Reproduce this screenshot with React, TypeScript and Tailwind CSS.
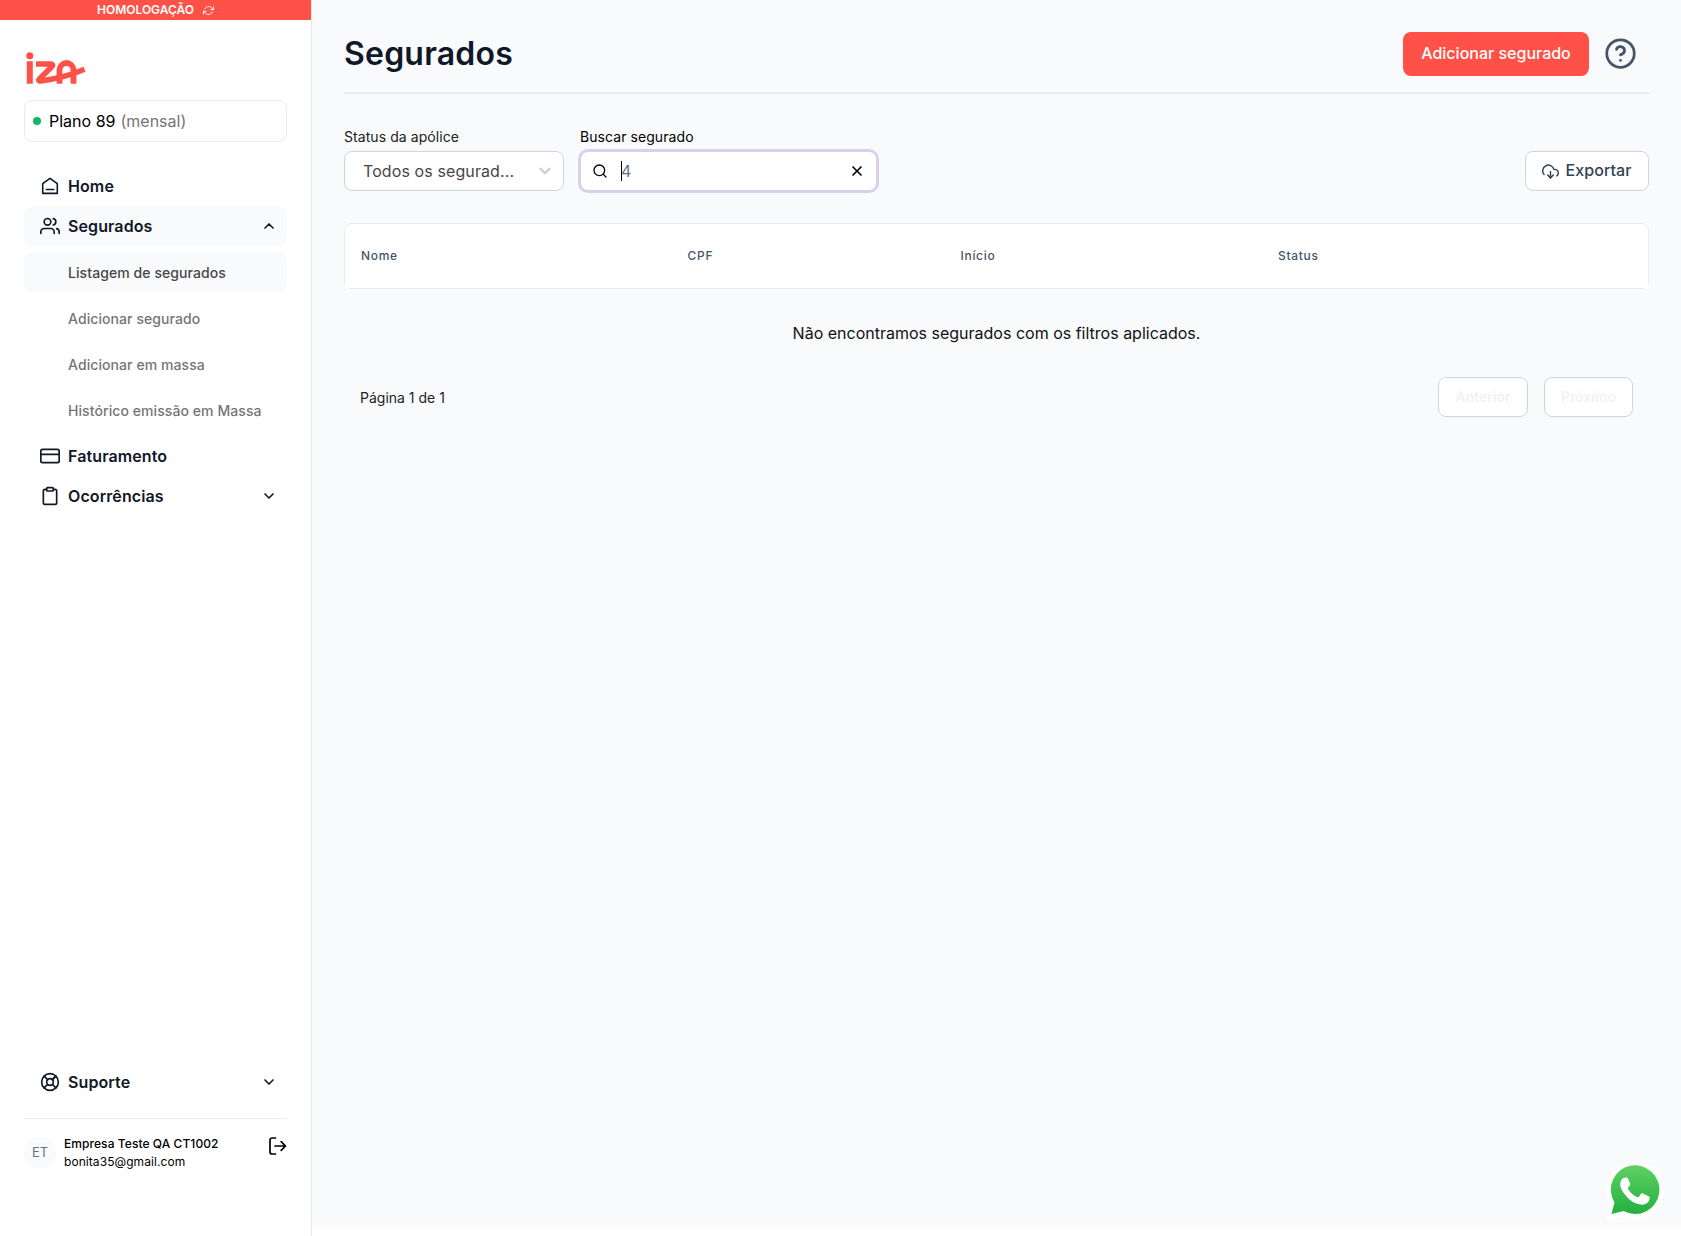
import React from "react";
import { FiUsers, FiCreditCard, FiClipboard, FiLifeBuoy, FiChevronDown, FiChevronUp, FiSearch, FiX, FiHelpCircle, FiDownloadCloud, FiRefreshCw } from "react-icons/fi";

function Logo() {
  return (
    <svg className="block" width="60" height="34" viewBox="0 0 60 34" fill="none">
      <circle cx="3.800" cy="3.800" r="3.500" fill="#ff5148" />
      <path d="M3.800 9.200v22.500" stroke="#ff5148" strokeWidth="6" />
      <path
        d="M10 12h15.200c1.400 0 1.900 1.200 1 2.300L13.400 27c-1.200 1.300-.5 2.200 1.400 1.900C31 27 44 23.500 58.500 17.300"
        stroke="#ff5148"
        strokeWidth="5.500"
        strokeLinejoin="round"
      />
      <path d="M33.500 31.700V18.800c0-10.400 14-10.400 14 0v12.900" stroke="#ff5148" strokeWidth="5.800" />
    </svg>
  );
}

function HomeIcon() {
  return (
    <svg width="20" height="20" viewBox="0 0 20 20" fill="none" stroke="currentColor" strokeWidth="1.6" strokeLinejoin="round" strokeLinecap="round">
      <path d="M2.700 7.700 10 2.300l7.300 5.400v9.700H2.700z" />
      <path d="M6.300 13.500h7.400" />
    </svg>
  );
}

function LogoutIcon() {
  return (
    <svg width="18" height="18" viewBox="0 0 18 18" fill="none" stroke="currentColor" strokeWidth="1.700" strokeLinecap="round" strokeLinejoin="round">
      <path d="M6.500 1H3a2 2 0 0 0-2 2v12a2 2 0 0 0 2 2h3.500M6 9h10.500M12.200 4.700 16.500 9l-4.300 4.300" />
    </svg>
  );
}

function WhatsApp() {
  return (
    <svg className="block" width="60" height="60" viewBox="0 0 60 60">
      <defs>
        <linearGradient id="wa" x1="0" y1="0" x2="0" y2="1">
          <stop offset="0" stopColor="#5fd163" />
          <stop offset="1" stopColor="#22b03f" />
        </linearGradient>
      </defs>
      <path d="M1 59 5.200 43.500A29 29 0 1 1 17 54.700Z" fill="#fff" />
      <path d="M6.500 52 9.500 40.500A24.300 24.300 0 1 1 18.500 49Z" fill="url(#wa)" />
      <path
        d="M20.500 15.500c-1.400 0-3 .8-3.900 2.200-3 4.300-.7 9.600 2.700 14.100 4.200 5.600 9.500 10 16 10.800 4.500.5 8.700-1.800 9.300-6.200.2-1.300 0-1.700-1-2.200l-5.700-2.700c-1-.4-1.500-.2-2.100.6l-2 2.600c-.5.6-1 .7-1.800.4-3.900-1.700-6.800-4.400-9-8-.4-.7-.3-1.100.2-1.700l1.700-2.100c.4-.6.4-1.100.2-1.700l-2.200-5.200c-.4-.8-.9-.9-2.400-.9Z"
        fill="#fff"
      />
    </svg>
  );
}

type NavItemProps = { icon: React.ReactNode; label: string; chevron?: "up" | "down"; active?: boolean };

function NavItem({ icon, label, chevron, active }: NavItemProps) {
  return (
    <div className={`flex h-10 items-center rounded-lg pr-2.5 pl-4 text-[#101828] ${active ? "bg-[#f9fafc]" : ""}`}>
      <span className="flex w-5 justify-center">{icon}</span>
      <span className="ml-2 flex-1 text-base font-semibold tracking-[0.1px]">{label}</span>
      {chevron === "up" && <FiChevronUp size={16} strokeWidth={2.500} />}
      {chevron === "down" && <FiChevronDown size={16} strokeWidth={2.500} />}
    </div>
  );
}

function SubItem({ label, active }: { label: string; active?: boolean }) {
  return (
    <div className={`flex h-10 items-center rounded-lg pt-[2px] pl-11 text-sm font-medium tracking-[0.08px] ${active ? "bg-[#f9fafc] text-[#464646]" : "text-[#757575]"}`}>
      {label}
    </div>
  );
}

function Sidebar() {
  return (
    <aside className="flex h-[1236px] w-[312px] shrink-0 flex-col border-r border-[#e4e7ec] bg-white">
      <div className="flex h-5 items-center justify-center gap-[9px] bg-[#ff5148] text-xs font-semibold text-white">
        HOMOLOGAÇÃO
        <FiRefreshCw size={11} strokeWidth={2} />
      </div>
      <div className="flex flex-1 flex-col px-6">
        <div className="mt-8 ml-[2px]">
          <Logo />
        </div>
        <div className="mt-[14px] flex h-[42px] items-center rounded-lg border border-[#eaebee] pl-2 text-base">
          <span className="size-2 rounded-full bg-[#12b569]" />
          <span className="ml-2 text-black">Plano 89</span>
          <span className="ml-[5px] text-[#757575]">(mensal)</span>
        </div>
        <nav className="mt-6 flex flex-col">
          <NavItem icon={<HomeIcon />} label="Home" />
          <NavItem icon={<FiUsers size={20} strokeWidth={2} />} label="Segurados" chevron="up" active />
          <div className="my-1.5 flex flex-col gap-1.5">
            <SubItem label="Listagem de segurados" active />
            <SubItem label="Adicionar segurado" />
            <SubItem label="Adicionar em massa" />
            <SubItem label="Histórico emissão em Massa" />
          </div>
          <NavItem icon={<FiCreditCard size={20} />} label="Faturamento" />
          <NavItem icon={<FiClipboard size={20} />} label="Ocorrências" chevron="down" />
        </nav>
        <div className="mt-auto">
          <NavItem icon={<FiLifeBuoy size={20} />} label="Suporte" chevron="down" />
        </div>
        <div className="mt-4 mb-[65px] flex border-t border-[#eaecf0] pt-[18px]">
          <div className="flex size-8 items-center justify-center rounded-full bg-[#f9fafc] text-[13px] text-[#667085]">ET</div>
          <div className="ml-2 flex-1 text-xs leading-[18px] tracking-[0.07px] text-black">
            <div className="-mt-[2px] font-medium">Empresa Teste QA CT1002</div>
            <div>bonita35@gmail.com</div>
          </div>
          <LogoutIcon />
        </div>
      </div>
    </aside>
  );
}

function Main() {
  return (
    <main className="h-[1227px] flex-1 bg-[#f9fafc] px-8">
      <header className="flex h-[94px] items-start justify-between border-b-2 border-[#eaebee] pt-8">
        <h1 className="text-[32px] leading-[44px] font-semibold tracking-[0.2px] text-[#101828]">Segurados</h1>
        <div className="flex items-center">
          <button className="h-11 w-[186px] rounded-lg bg-[#ff5148] pb-0.5 text-base font-medium text-white">Adicionar segurado</button>
          <FiHelpCircle className="mr-3 mb-px ml-[15px] text-[#475467]" size={33} />
        </div>
      </header>
      <div className="mt-[33px] flex items-end justify-between">
        <div className="flex gap-4">
          <div>
            <div className="text-sm tracking-[0.07px] text-[#222]">Status da apólice</div>
            <div className="mt-1 flex h-10 w-[220px] items-center justify-between rounded-lg border border-[#d0d5dd] bg-white pr-[9px] pl-[18px] text-base tracking-[0.1px] text-[#464646]">
              Todos os segurad...
              <FiChevronDown className="text-[#ccc]" size={18} strokeWidth={3} />
            </div>
          </div>
          <div>
            <div className="text-sm tracking-[0.07px] text-black">Buscar segurado</div>
            <div className="mt-1 flex h-10 w-[297px] items-center rounded-lg border border-[#d9d1ec] bg-white px-[11px] text-base text-[#667085] ring-2 ring-[#d9d1ec]">
              <FiSearch className="text-black" size={16} />
              <span className="ml-[13px] h-5 w-px bg-black" />
              <span className="-ml-px flex-1">4</span>
              <FiX className="text-black" size={16} strokeWidth={2.500} />
            </div>
          </div>
        </div>
        <button className="flex h-10 w-[124px] items-center justify-center gap-1.5 rounded-lg border border-[#d0d5dd] bg-white text-base font-medium tracking-[0.08px] text-[#344054]">
          <FiDownloadCloud size={17} />
          <span className="pb-0.5">Exportar</span>
        </button>
      </div>
      <div className="mt-8 h-[66px] rounded-lg border border-[#eaebee]">
        <div className="flex h-full items-center rounded-t-[7px] bg-white pl-4 text-xs font-medium tracking-[0.7px] text-[#475467]">
          <div className="w-[326.500px]">Nome</div>
          <div className="w-[273px]">CPF</div>
          <div className="w-[317.500px]">Início</div>
          <div>Status</div>
        </div>
      </div>
      <p className="mt-8 text-center text-base text-[#111]">Não encontramos segurados com os filtros aplicados.</p>
      <div className="mt-8 flex items-center justify-between px-4">
        <span className="pt-[2px] text-sm text-[#222]">Página 1 de 1</span>
        <div className="flex gap-4 text-sm font-semibold text-[#f2f2f2]">
          <button className="h-10 w-[90px] rounded-lg border border-[#d0d5dd] bg-white">Anterior</button>
          <button className="h-10 w-[89px] rounded-lg border border-[#d0d5dd] bg-white">Próximo</button>
        </div>
      </div>
    </main>
  );
}

export default function App() {
  return (
    <div className="flex h-[1236px] overflow-hidden bg-white font-['Inter',sans-serif]">
      <Sidebar />
      <Main />
      <a className="fixed right-[16px] bottom-[14px]" aria-label="WhatsApp">
        <WhatsApp />
      </a>
    </div>
  );
}
